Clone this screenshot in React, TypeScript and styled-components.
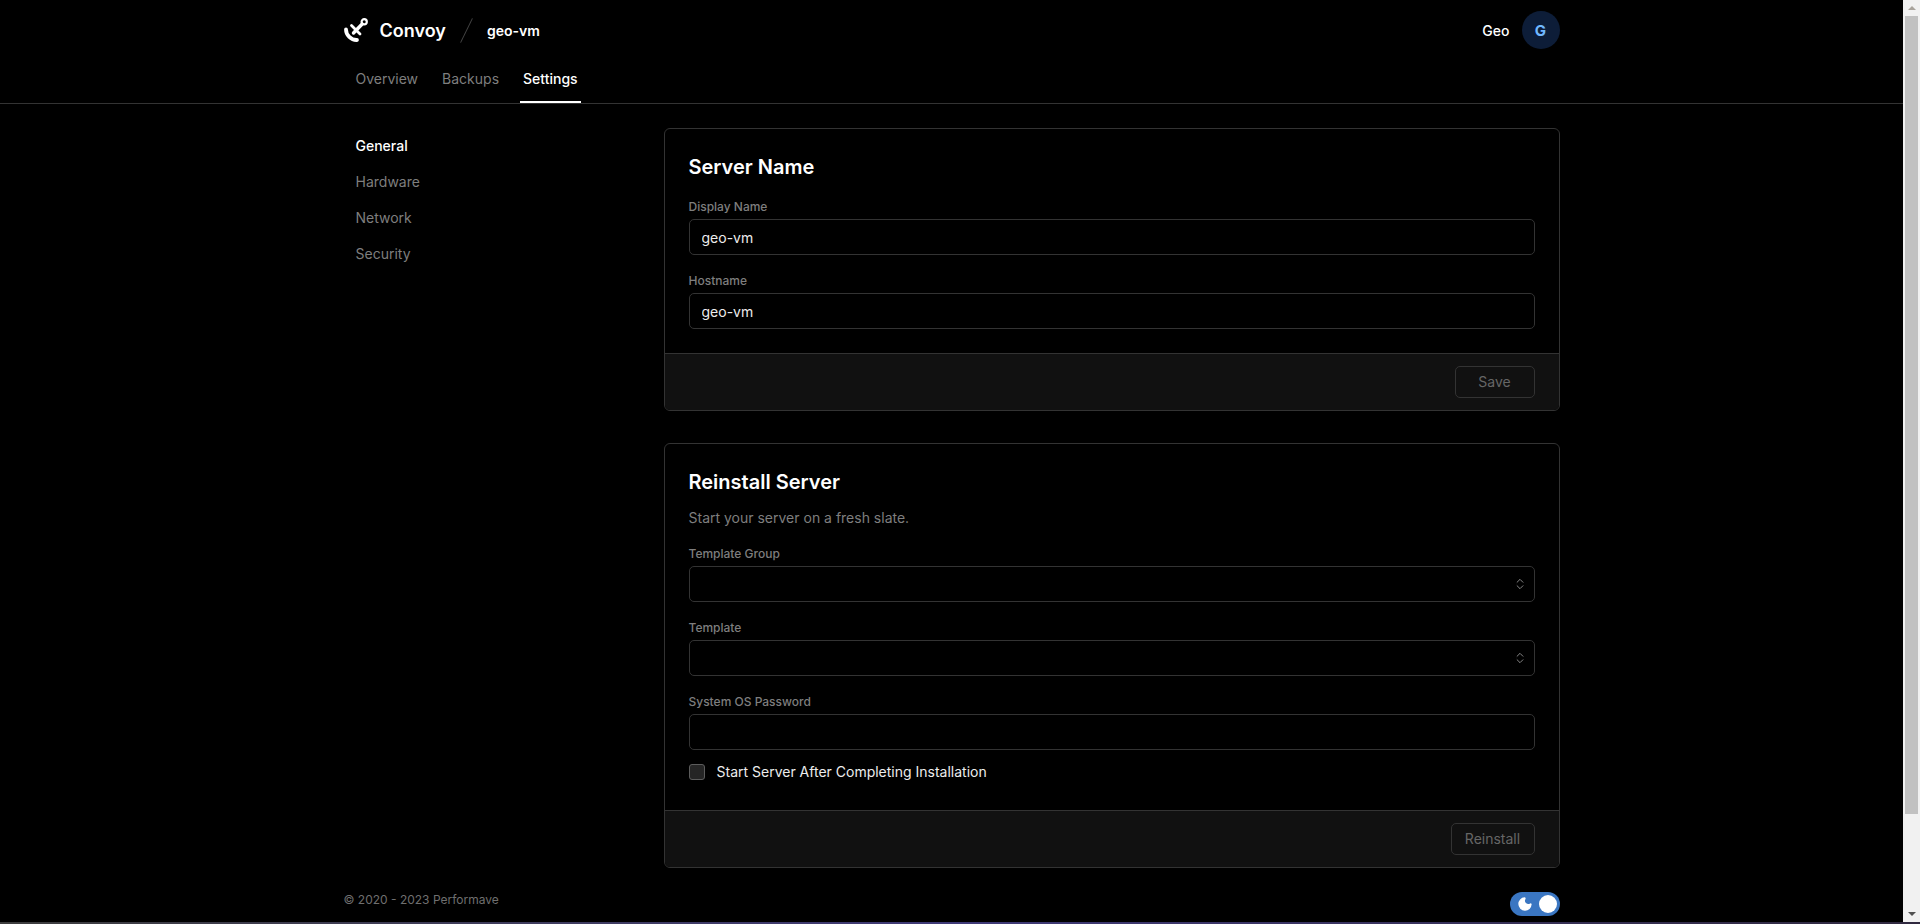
import styled, { createGlobalStyle } from "styled-components";
import { ChevronsUpDown, Moon } from "lucide-react";

const GlobalStyle = createGlobalStyle`
  html, body, #root {
    height: 100%;
    margin: 0;
  }
  body {
    background: #000;
    color: #ededed;
    font-family: Inter, "Noto Sans", sans-serif;
    font-size: 14px;
    overflow: hidden;
  }
  * {
    box-sizing: border-box;
  }
`;

const Shell = styled.div`
  height: 100%;
  display: flex;
  flex-direction: column;
`;

const Viewport = styled.div`
  flex: 1;
  min-height: 0;
  display: flex;
`;

const Page = styled.div`
  flex: 1;
  min-width: 0;
  overflow: hidden;
  background: #000;
`;

const ScrollRail = styled.div`
  width: 17px;
  flex-shrink: 0;
  display: flex;
  flex-direction: column;
  background: #f1f1f1;
`;

const RailButton = styled.div`
  height: 16px;
  flex-shrink: 0;
  display: flex;
  align-items: center;
  justify-content: center;
`;

const RailArrow = styled.span<{ $down?: boolean }>`
  width: 0;
  height: 0;
  border-left: 4px solid transparent;
  border-right: 4px solid transparent;
  border-bottom: ${({ $down }) => ($down ? "0" : "4px solid #a8a39c")};
  border-top: ${({ $down }) => ($down ? "4px solid #505050" : "0")};
`;

const RailTrack = styled.div`
  flex: 1;
  padding: 0 2px;
`;

const RailThumb = styled.div`
  height: 798px;
  background: #c1c1c1;
`;

const BottomEdge = styled.div`
  height: 2px;
  flex-shrink: 0;
  background: linear-gradient(90deg, #3d3d3d, #3f3a78 50%, #30293f);
`;

const Wrap = styled.div`
  width: 1216px;
  margin: 0 auto;
`;

const Header = styled.header`
  height: 104px;
  border-bottom: 1px solid #333;
`;

const TopRow = styled.div`
  display: flex;
  align-items: center;
  justify-content: space-between;
  padding-top: 11px;
  height: 49px;
`;

const Brand = styled.div`
  display: flex;
  align-items: center;
`;

const Logo = styled.svg`
  width: 24px;
  height: 24px;
  fill: none;
  stroke: #fff;
  stroke-linecap: round;
  stroke-linejoin: round;
`;

const BrandName = styled.span`
  margin-left: 12px;
  font-size: 18px;
  font-weight: 600;
  color: #fff;
`;

const Slash = styled.span`
  width: 1px;
  height: 27px;
  margin-left: 20px;
  background: #444;
  transform: rotate(26deg);
`;

const ServerName = styled.span`
  margin-left: 20px;
  font-weight: 600;
  color: #fff;
`;

const UserBox = styled.div`
  display: flex;
  align-items: center;
  gap: 12px;
`;

const UserName = styled.span`
  font-weight: 500;
  color: #fff;
`;

const Avatar = styled.div`
  width: 38px;
  height: 38px;
  border-radius: 50%;
  display: flex;
  align-items: center;
  justify-content: center;
  background: #0d1d38;
  color: #70b8ff;
  font-size: 15px;
  font-weight: 700;
`;

const Tabs = styled.nav`
  display: flex;
  gap: 18px;
  margin-top: 12px;
  padding-left: 9px;
`;

const Tab = styled.a<{ $active?: boolean }>`
  padding: 8px 3px 12px;
  line-height: 20px;
  border-bottom: 2px solid ${({ $active }) => ($active ? "#fff" : "transparent")};
  color: ${({ $active }) => ($active ? "#fff" : "#7e7e7e")};
  font-weight: ${({ $active }) => ($active ? 500 : 400)};
`;

const Main = styled(Wrap)`
  display: grid;
  grid-template-columns: 320px 896px;
  padding-top: 24px;
`;

const SideNav = styled.nav`
  display: flex;
  flex-direction: column;
  gap: 16px;
  padding: 8px 0 0 12px;
`;

const SideLink = styled.a<{ $active?: boolean }>`
  line-height: 20px;
  color: ${({ $active }) => ($active ? "#fff" : "#7e7e7e")};
  font-weight: ${({ $active }) => ($active ? 500 : 400)};
`;

const Cards = styled.div`
  display: flex;
  flex-direction: column;
  gap: 32px;
`;

const Card = styled.section`
  border: 1px solid #333;
  border-radius: 6px;
  overflow: hidden;
`;

const CardBody = styled.div`
  padding: 24px;
`;

const CardTitle = styled.h2`
  margin: 0;
  font-size: 20px;
  line-height: 28px;
  font-weight: 600;
  color: #fff;
`;

const CardText = styled.p`
  margin: 12px 0 0;
  line-height: 20px;
  color: #7e7e7e;
`;

const Field = styled.div`
  margin-top: 18px;
  display: flex;
  flex-direction: column;
  gap: 4px;
`;

const FieldLabel = styled.label`
  font-size: 12px;
  line-height: 16px;
  font-weight: 500;
  color: #7e7e7e;
`;

const TextInput = styled.input`
  height: 36px;
  width: 100%;
  padding: 0 12px;
  background: #000;
  border: 1px solid #333;
  border-radius: 5px;
  color: #ededed;
  font: inherit;
  outline: none;
`;

const SelectBox = styled.button`
  height: 36px;
  width: 100%;
  padding: 0 7px 0 12px;
  display: flex;
  align-items: center;
  justify-content: flex-end;
  background: #000;
  border: 1px solid #333;
  border-radius: 5px;
  color: #8f8f8f;
`;

const CheckRow = styled.div`
  display: flex;
  align-items: center;
  gap: 12px;
  height: 20px;
  margin: 12px 0 4px;
`;

const CheckBox = styled.input`
  appearance: none;
  width: 16px;
  height: 16px;
  margin: 0;
  background: #252525;
  border: 1px solid #5c5c5c;
  border-radius: 3px;
`;

const CheckLabel = styled.label`
  padding-bottom: 1px;
  color: #ededed;
`;

const CardFooter = styled.div`
  display: flex;
  justify-content: flex-end;
  padding: 12px 24px;
  background: #111;
  border-top: 1px solid #333;
`;

const GhostButton = styled.button<{ $wide?: boolean }>`
  height: 32px;
  width: ${({ $wide }) => ($wide ? "84px" : "80px")};
  padding: 0 0 2px;
  background: transparent;
  border: 1px solid #333;
  border-radius: 5px;
  color: #666;
  font: inherit;
`;

const PageFooter = styled(Wrap)`
  display: flex;
  align-items: flex-start;
  justify-content: space-between;
  padding-top: 24px;
`;

const Copyright = styled.span`
  font-size: 12px;
  line-height: 16px;
  color: #6f6f6f;
`;

const ThemeToggle = styled.div`
  width: 50px;
  height: 24px;
  padding: 0 3px 0 7px;
  display: flex;
  align-items: center;
  justify-content: space-between;
  border-radius: 12px;
  background: #3a76c2;
`;

const MoonIcon = styled(Moon)`
  width: 16px;
  height: 16px;
  color: #fff;
  fill: #fff;
`;

const Knob = styled.span`
  width: 18px;
  height: 18px;
  border-radius: 50%;
  background: #fff;
`;

const App = () => {
  return (
    <Shell>
      <GlobalStyle />
      <Viewport>
        <Page>
          <Header>
            <Wrap>
              <TopRow>
                <Brand>
                  <Logo viewBox="0 0 24 24">
                    <circle cx="20.2" cy="3.8" r="2.6" strokeWidth="2.2" />
                    <path d="M18.2 6 L9.5 15" strokeWidth="3.4" />
                    <path d="M7.5 7.5 L16 16" strokeWidth="2.8" />
                    <path d="M2 11.5 C2 17 7 22.3 13 22" strokeWidth="3.8" />
                  </Logo>
                  <BrandName>Convoy</BrandName>
                  <Slash />
                  <ServerName>geo-vm</ServerName>
                </Brand>
                <UserBox>
                  <UserName>Geo</UserName>
                  <Avatar>G</Avatar>
                </UserBox>
              </TopRow>
              <Tabs>
                <Tab>Overview</Tab>
                <Tab>Backups</Tab>
                <Tab $active>Settings</Tab>
              </Tabs>
            </Wrap>
          </Header>
          <Main>
            <SideNav>
              <SideLink $active>General</SideLink>
              <SideLink>Hardware</SideLink>
              <SideLink>Network</SideLink>
              <SideLink>Security</SideLink>
            </SideNav>
            <Cards>
              <Card>
                <CardBody>
                  <CardTitle>Server Name</CardTitle>
                  <Field>
                    <FieldLabel>Display Name</FieldLabel>
                    <TextInput defaultValue="geo-vm" />
                  </Field>
                  <Field>
                    <FieldLabel>Hostname</FieldLabel>
                    <TextInput defaultValue="geo-vm" />
                  </Field>
                </CardBody>
                <CardFooter>
                  <GhostButton disabled>Save</GhostButton>
                </CardFooter>
              </Card>
              <Card>
                <CardBody>
                  <CardTitle>Reinstall Server</CardTitle>
                  <CardText>Start your server on a fresh slate.</CardText>
                  <Field>
                    <FieldLabel>Template Group</FieldLabel>
                    <SelectBox>
                      <ChevronsUpDown size={14} strokeWidth={1.6} />
                    </SelectBox>
                  </Field>
                  <Field>
                    <FieldLabel>Template</FieldLabel>
                    <SelectBox>
                      <ChevronsUpDown size={14} strokeWidth={1.6} />
                    </SelectBox>
                  </Field>
                  <Field>
                    <FieldLabel>System OS Password</FieldLabel>
                    <TextInput type="password" />
                  </Field>
                  <CheckRow>
                    <CheckBox type="checkbox" />
                    <CheckLabel>Start Server After Completing Installation</CheckLabel>
                  </CheckRow>
                </CardBody>
                <CardFooter>
                  <GhostButton disabled $wide>
                    Reinstall
                  </GhostButton>
                </CardFooter>
              </Card>
            </Cards>
          </Main>
          <PageFooter>
            <Copyright>© 2020 - 2023 Performave</Copyright>
            <ThemeToggle>
              <MoonIcon />
              <Knob />
            </ThemeToggle>
          </PageFooter>
        </Page>
        <ScrollRail>
          <RailButton>
            <RailArrow />
          </RailButton>
          <RailTrack>
            <RailThumb />
          </RailTrack>
          <RailButton>
            <RailArrow $down />
          </RailButton>
        </ScrollRail>
      </Viewport>
      <BottomEdge />
    </Shell>
  );
};

export default App;
